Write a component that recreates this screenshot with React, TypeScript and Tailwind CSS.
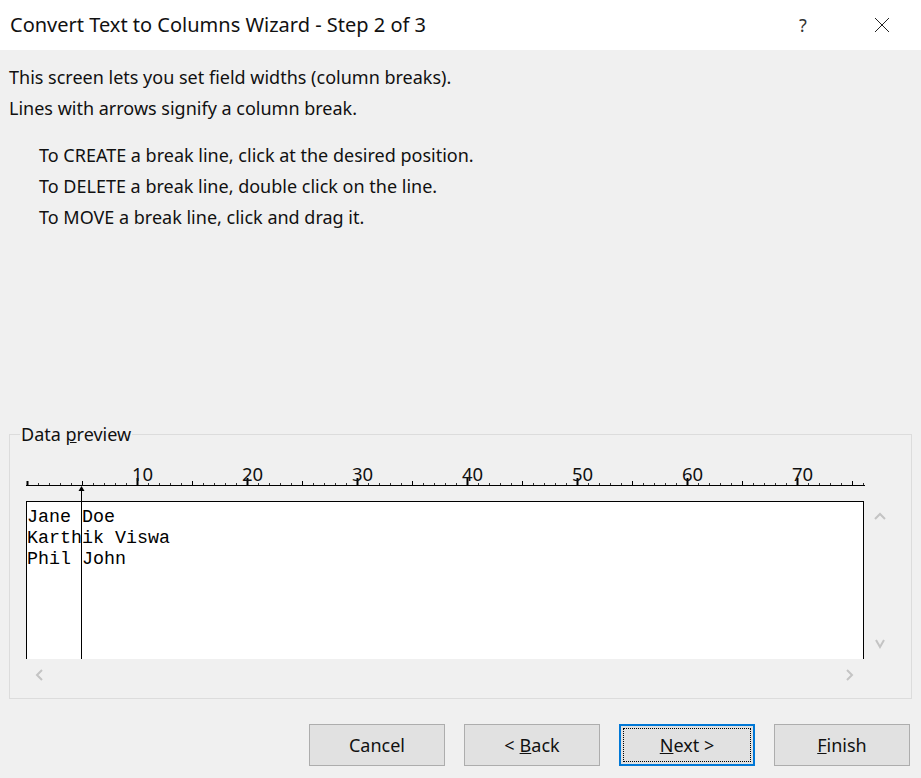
import React from 'react';

const ui = { fontFamily: '"Noto Sans", "Open Sans", sans-serif' };
const mono = { fontFamily: '"Liberation Mono", "Courier New", monospace' };

function Ruler() {
  const x = (i: number) => 7 + 11 * i;
  const ticks = [];
  for (let i = 0; i <= 76; i++) {
    if (i % 10 === 0) {
      ticks.push(<rect key={i} x={x(i) - 0.5} y={i === 0 ? 21 : 18} width={2} height={i === 0 ? 4 : 7} fill="#000" />);
    } else if (i % 5 === 0) {
      ticks.push(<rect key={i} x={x(i)} y={21} width={1} height={4} fill="#000" />);
    } else {
      ticks.push(<rect key={i} x={x(i)} y={23} width={1} height={2} fill="#333" />);
    }
  }
  const labels = [10, 20, 30, 40, 50, 60, 70];
  return (
    <svg width={850} height={41} className="block ml-[10px] mt-[14px]">
      <rect x={6} y={25} width={839} height={1} fill="#000" />
      {ticks}
      {labels.map((n) => (
        <text key={n} x={x(n) - 5} y={21} fontSize={18.5} fill="#111" style={ui}>
          {n}
        </text>
      ))}
      <rect x={61} y={29} width={1} height={12} fill="#000" />
      <polygon points="61.5,26 58.5,31 64.5,31" fill="#000" />
    </svg>
  );
}

function Chevron({ dir }: { dir: 'up' | 'down' | 'left' | 'right' }) {
  const pts = {
    up: '1,7 6,2 11,7',
    down: '2,2 6,9 10,2',
    left: '8,1 3,6 8,11',
    right: '4,1 9,6 4,11',
  }[dir];
  return (
    <svg width={12} height={12} viewBox="0 0 12 12">
      <polyline points={pts} fill="none" stroke="#c4c4c4" strokeWidth={2} />
    </svg>
  );
}

function Btn({ children, focused }: { children: React.ReactNode; focused?: boolean }) {
  return (
    <button
      className={
        'w-[136px] h-[42px] bg-[#e1e1e1] text-[18px] text-[#111] flex items-center justify-center ' +
        (focused ? 'border-2 border-[#0078d7] p-[2px]' : 'border border-[#adadad]')
      }
      style={ui}
    >
      {focused ? (
        <span className="w-full h-full border border-dotted border-black flex items-center justify-center">
          {children}
        </span>
      ) : (
        children
      )}
    </button>
  );
}

export default function App() {
  return (
    <div className="w-[921px] h-[778px] bg-[#f0f0f0] flex flex-col overflow-hidden text-[#111]" style={ui}>
      <div className="h-[50px] bg-white flex items-center pl-[10px] shrink-0">
        <span className="text-[20px]">Convert Text to Columns Wizard - Step 2 of 3</span>
        <span className="ml-auto text-[18px] text-[#333] w-[20px] text-center">?</span>
        <svg width={16} height={16} className="ml-[61px] mr-[31px]" viewBox="0 0 16 16">
          <path d="M1 1 L15 15 M15 1 L1 15" stroke="#222" strokeWidth={1} />
        </svg>
      </div>

      <div className="h-[372px] pt-[12px] pl-[9px] text-[18px] leading-[31px] shrink-0">
        <p>This screen lets you set field widths (column breaks).</p>
        <p>Lines with arrows signify a column break.</p>
        <div className="mt-[16px] pl-[30px]">
          <p>To CREATE a break line, click at the desired position.</p>
          <p>To DELETE a break line, double click on the line.</p>
          <p>To MOVE a break line, click and drag it.</p>
        </div>
      </div>

      <fieldset className="mx-[9px] border border-[#dcdcdc] pb-[8px] shrink-0">
        <legend className="ml-[10px] px-[1px] text-[18px] leading-[24px]">
          Data <u>p</u>review
        </legend>
        <Ruler />
        <div className="flex ml-[16px]">
          <div className="relative w-[838px] h-[158px] bg-white border-x border-t border-black overflow-hidden">
            <div className="pt-[5px] text-[18.33px] leading-[21px] whitespace-pre text-black" style={mono}>
              <div>Jane Doe</div>
              <div>Karthik Viswa</div>
              <div>Phil John</div>
            </div>
            <div className="absolute left-[54px] top-0 bottom-0 w-px bg-black" />
          </div>
          <div className="w-[32px] flex flex-col items-center justify-between pt-[11px] pb-[9px]">
            <Chevron dir="up" />
            <Chevron dir="down" />
          </div>
        </div>
        <div className="h-[31px] ml-[16px] w-[838px] flex items-center justify-between pl-[8px] pr-[9px]">
          <Chevron dir="left" />
          <Chevron dir="right" />
        </div>
      </fieldset>

      <div className="mt-[25px] flex justify-end gap-[19px] pr-[11px]">
        <Btn>Cancel</Btn>
        <Btn>
          &lt; <u className="ml-[5px]">B</u>ack
        </Btn>
        <Btn focused>
          <u>N</u>ext &gt;
        </Btn>
        <Btn>
          <u>F</u>inish
        </Btn>
      </div>
    </div>
  );
}
